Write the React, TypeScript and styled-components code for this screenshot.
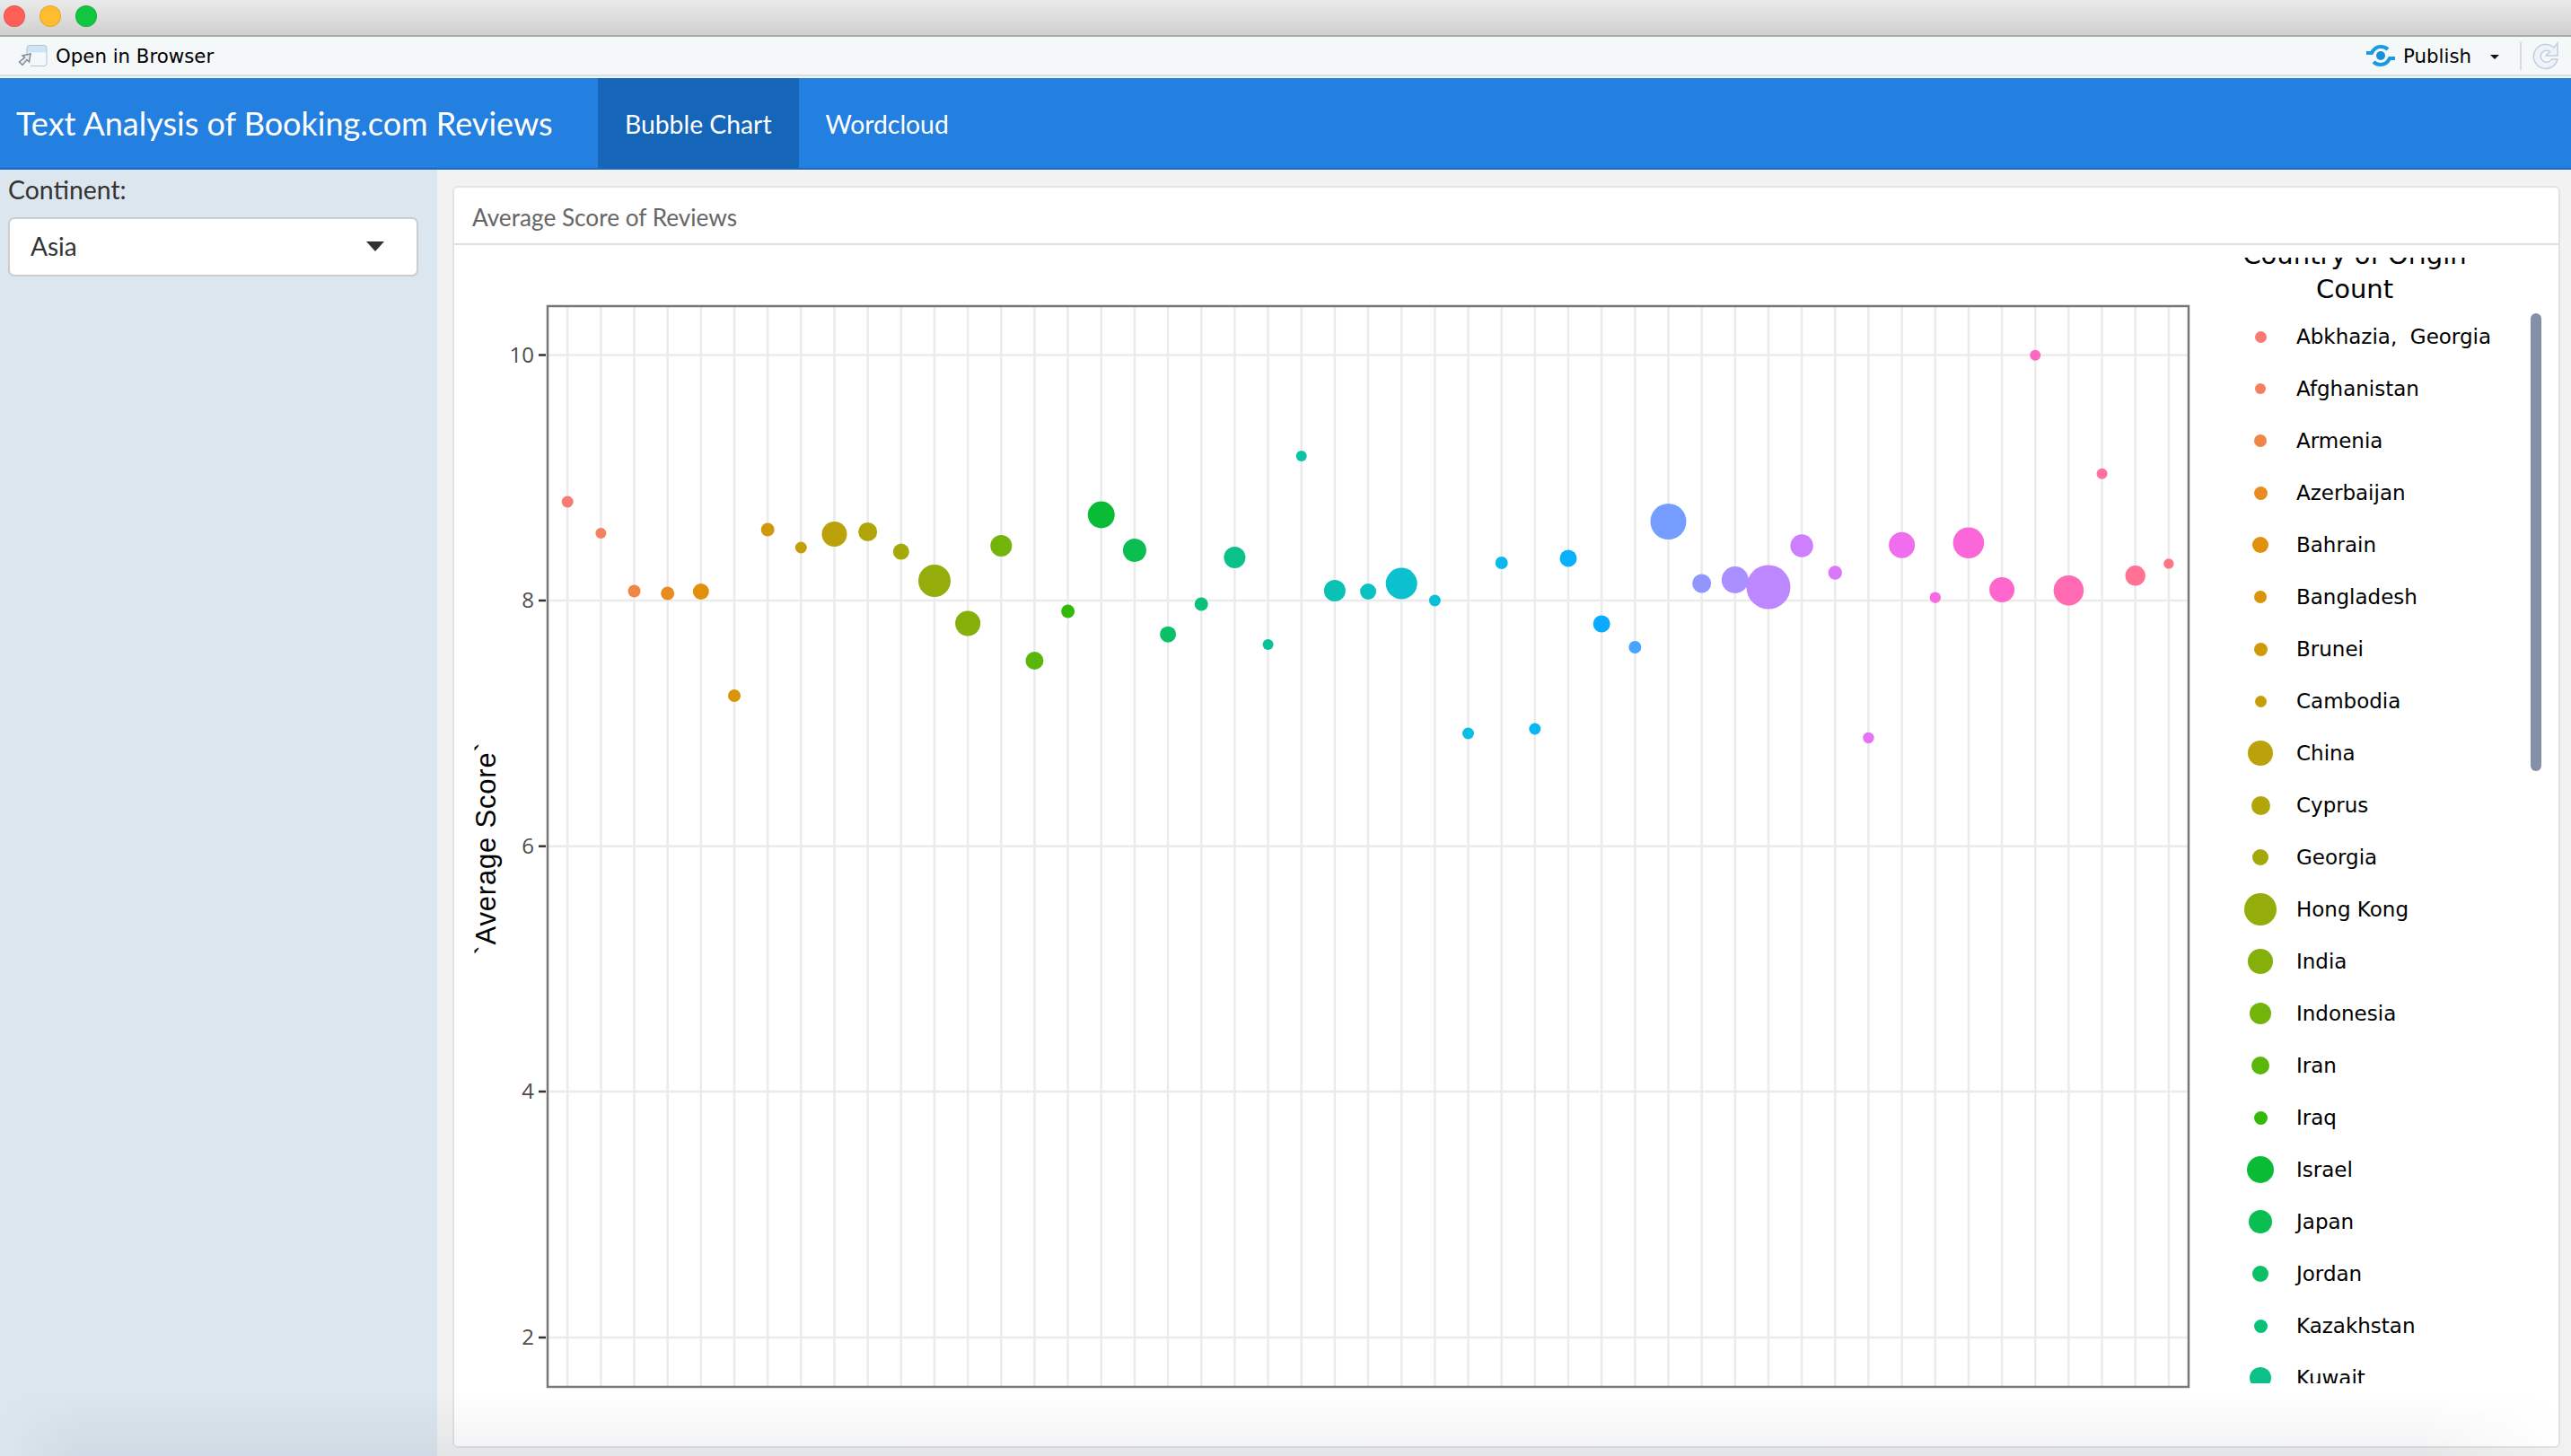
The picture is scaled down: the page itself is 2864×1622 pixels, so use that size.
import styled, { createGlobalStyle } from "styled-components";

const GlobalStyle = createGlobalStyle`
  html, body {
    margin: 0;
    padding: 0;
    background: #f2f2f2;
  }
  * {
    box-sizing: border-box;
  }
`;

const uiFont = `"Lato", "Open Sans", sans-serif`;
const chromeFont = `"DejaVu Sans", sans-serif`;

// ggplot's default hue palette, so the 49 countries get the same colours
const hueColor = (i: number, total: number) => {
  const h = ((15 + (360 * i) / total) * Math.PI) / 180;
  const l = 65;
  const c = 100;
  const u = Math.cos(h) * c;
  const v = Math.sin(h) * c;
  const Y = Math.pow((l + 16) / 116, 3);
  const un = 0.19793943;
  const vn = 0.46831096;
  const up = u / (13 * l) + un;
  const vp = v / (13 * l) + vn;
  const X = (Y * 9 * up) / (4 * vp);
  const Z = (Y * (12 - 3 * up - 20 * vp)) / (4 * vp);
  const gamma = (x: number) => {
    const clipped = Math.min(1, Math.max(0, x));
    const out =
      clipped <= 0.0031308
        ? 12.92 * clipped
        : 1.055 * Math.pow(clipped, 1 / 2.4) - 0.055;
    return Math.round(out * 255);
  };
  const r = gamma(3.2406 * X - 1.5372 * Y - 0.4986 * Z);
  const g = gamma(-0.9689 * X + 1.8758 * Y + 0.0415 * Z);
  const bl = gamma(0.0557 * X - 0.204 * Y + 1.057 * Z);
  return `rgba(${r},${g},${bl},0.96)`;
};

// y and radius are in page pixels, read off the screenshot
const bubbles: { y: number; r: number }[] = [
  { y: 559, r: 6.5 },
  { y: 594, r: 6 },
  { y: 658.5, r: 7 },
  { y: 661, r: 7.5 },
  { y: 659, r: 9 },
  { y: 775, r: 7 },
  { y: 590, r: 7.5 },
  { y: 610, r: 6.5 },
  { y: 595, r: 14 },
  { y: 592.5, r: 10.5 },
  { y: 614.6, r: 9 },
  { y: 647, r: 18 },
  { y: 694.5, r: 14 },
  { y: 608, r: 12 },
  { y: 736, r: 10 },
  { y: 681, r: 7.5 },
  { y: 573.5, r: 15 },
  { y: 613, r: 13 },
  { y: 706.7, r: 9 },
  { y: 673, r: 7.5 },
  { y: 621, r: 12 },
  { y: 718, r: 6 },
  { y: 508, r: 6 },
  { y: 658, r: 12 },
  { y: 659, r: 9 },
  { y: 650, r: 17.5 },
  { y: 669, r: 6.5 },
  { y: 817, r: 6.5 },
  { y: 627, r: 7 },
  { y: 812, r: 6.5 },
  { y: 622, r: 9.5 },
  { y: 695, r: 9.5 },
  { y: 721, r: 7 },
  { y: 581, r: 20 },
  { y: 650, r: 10.5 },
  { y: 646, r: 15 },
  { y: 654, r: 24.5 },
  { y: 608, r: 12.7 },
  { y: 638, r: 7.7 },
  { y: 822, r: 6.2 },
  { y: 607.3, r: 14.5 },
  { y: 665.7, r: 6.2 },
  { y: 604.7, r: 17.3 },
  { y: 657, r: 14 },
  { y: 395.7, r: 6 },
  { y: 657.7, r: 16.8 },
  { y: 527.7, r: 6 },
  { y: 641.3, r: 11.2 },
  { y: 628, r: 5.7 },
];

const countries = [
  "Abkhazia,  Georgia",
  "Afghanistan",
  "Armenia",
  "Azerbaijan",
  "Bahrain",
  "Bangladesh",
  "Brunei",
  "Cambodia",
  "China",
  "Cyprus",
  "Georgia",
  "Hong Kong",
  "India",
  "Indonesia",
  "Iran",
  "Iraq",
  "Israel",
  "Japan",
  "Jordan",
  "Kazakhstan",
  "Kuwait",
];

const ticks = [
  { label: "10", y: 395.5 },
  { label: "8", y: 669 },
  { label: "6", y: 942.7 },
  { label: "4", y: 1216 },
  { label: "2", y: 1490 },
];

const xFor = (i: number) => 632.2 + i * 37.16;

const Page = styled.div`
  position: relative;
  display: flex;
  flex-direction: column;
  width: 2864px;
  height: 1622px;
  overflow: hidden;
`;

const TitleBar = styled.div`
  display: flex;
  align-items: center;
  gap: 16px;
  flex: none;
  height: 41px;
  padding: 0 0 3px 4px;
  background: linear-gradient(#eaeaea, #d0d0d0);
  border-bottom: 2px solid #a9a9a9;
`;

const Light = styled.span<{ $color: string }>`
  width: 24px;
  height: 24px;
  border-radius: 50%;
  background: ${({ $color }) => $color};
  box-shadow: inset 0 0 0 1px rgba(0, 0, 0, 0.1);
`;

const Toolbar = styled.div`
  display: flex;
  align-items: center;
  flex: none;
  height: 44px;
  padding: 0 13px 0 20px;
  background: #f4f8f9;
  border-bottom: 2px solid #d9dfe2;
  font: 21.3px ${chromeFont};
  color: #000;
`;

const ToolbarLabel = styled.span`
  margin-left: 6px;
`;

const PublishLabel = styled.span`
  margin-left: 8px;
`;

const Spacer = styled.div`
  flex: 1;
`;

const PublishCaret = styled.span`
  width: 0;
  height: 0;
  margin: 3px 23px 0 21px;
  border-left: 5px solid transparent;
  border-right: 5px solid transparent;
  border-top: 5px solid #111;
`;

const ToolbarDivider = styled.span`
  width: 2px;
  height: 31px;
  margin-right: 12px;
  background: #d8dcdc;
`;

const Navbar = styled.nav`
  display: flex;
  align-items: stretch;
  flex: none;
  height: 102px;
  margin-top: 2px;
  background: #237fe0;
  border-bottom: 2px solid #1a69bd;
  color: #fff;
  font-family: ${uiFont};
`;

const Brand = styled.div`
  display: flex;
  align-items: center;
  width: 666px;
  padding-left: 18px;
  font-size: 36px;
`;

const Tab = styled.div<{ $active?: boolean }>`
  display: flex;
  align-items: center;
  padding: 2px 30px 0;
  font-size: 28.3px;
  background: ${({ $active }) => ($active ? "#1565b8" : "transparent")};
`;

const Body = styled.div`
  display: flex;
  flex: 1;
  min-height: 0;
`;

const Sidebar = styled.aside`
  flex: none;
  width: 487px;
  padding: 4px 21px 0 9px;
  background: #dce6ef;
  font-family: ${uiFont};
  color: #333;
`;

const FieldLabel = styled.label`
  display: block;
  height: 49px;
  font-size: 28.4px;
  line-height: 36px;
`;

const SelectBox = styled.div`
  display: flex;
  align-items: center;
  justify-content: space-between;
  height: 66px;
  padding: 0 36px 2px 23px;
  background: #fff;
  border: 2px solid #ccc;
  border-radius: 7px;
  font-size: 28px;
`;

const SelectCaret = styled.span`
  width: 0;
  height: 0;
  border-left: 10px solid transparent;
  border-right: 10px solid transparent;
  border-top: 11px solid #333;
`;

const Content = styled.main`
  flex: 1;
  min-width: 0;
  padding: 18px 12px 9px 17px;
`;

const Card = styled.section`
  display: flex;
  flex-direction: column;
  height: 100%;
  background: #fff;
  border: 2px solid #e2e2e2;
  border-radius: 6px;
  overflow: hidden;
`;

const CardHeader = styled.header`
  display: flex;
  align-items: center;
  flex: none;
  height: 64px;
  padding: 3px 0 0 20px;
  border-bottom: 2px solid #e0e0e0;
  font: 26.2px ${uiFont};
  color: #666;
`;

const CardBody = styled.div`
  display: flex;
  flex: 1;
  min-height: 0;
`;

const Plot = styled.svg`
  display: block;
  flex: none;
  width: 1960px;
  height: 1339px;
`;

const TickLabel = styled.text`
  font: 24px "Open Sans", sans-serif;
  fill: #4d4d4d;
`;

const AxisTitle = styled.text`
  font: 31px "Liberation Sans", sans-serif;
  letter-spacing: 0.8px;
  fill: #000;
`;

const Legend = styled.div`
  position: relative;
  flex: 1;
  height: 1254px;
  margin-top: 14px;
  overflow: hidden;
  font-family: ${chromeFont};
  color: #000;
`;

const LegendTitle = styled.div`
  width: 314px;
  margin-top: -22px;
  font-size: 29px;
  line-height: 38px;
  text-align: center;
`;

const LegendList = styled.ul`
  margin: 5px 0 0;
  padding: 0;
  list-style: none;
`;

const LegendRow = styled.li`
  display: flex;
  align-items: center;
  height: 58px;
  font-size: 23px;
  white-space: pre;
`;

const DotCell = styled.span`
  display: flex;
  align-items: center;
  justify-content: center;
  flex: none;
  width: 40px;
  margin: 0 20px 0 32px;
`;

const Dot = styled.span<{ $size: number; $color: string }>`
  width: ${({ $size }) => $size}px;
  height: ${({ $size }) => $size}px;
  border-radius: 50%;
  background: ${({ $color }) => $color};
`;

const LegendScrollbar = styled.div`
  position: absolute;
  top: 62px;
  right: 19px;
  width: 12px;
  height: 510px;
  border-radius: 6px;
  background: #8490a8;
`;

const WindowShade = styled.div`
  position: absolute;
  left: 0;
  right: 0;
  bottom: 0;
  height: 70px;
  pointer-events: none;
  background: linear-gradient(rgba(60, 70, 90, 0), rgba(60, 70, 90, 0.07));
  mask-image: linear-gradient(90deg, transparent 0, #000 90px, #000 2700px, transparent 100%);
`;

const OpenIcon = () => (
  <svg width="36" height="24" viewBox="0 0 36 24">
    <path d="M10 3.5a3 3 0 0 1 3-3h16a3 3 0 0 1 3 3v5H10z" fill="#cfe4f7" />
    <path
      d="M10 16V3.5a3 3 0 0 1 3-3h16a3 3 0 0 1 3 3v17a3 3 0 0 1-3 3H14"
      fill="none"
      stroke="#b3c2d0"
    />
    <path
      d="M5 12l9-2-1.500 9-2.500-2.500-5 6-3.500-3.500 6-5z"
      fill="#e8eef3"
      stroke="#7e8c98"
      strokeWidth="1.500"
    />
  </svg>
);

const PublishIcon = () => (
  <svg width="34" height="26" viewBox="0 0 34 26">
    <g fill="none" stroke="#1a9ae0" strokeWidth="4">
      <path d="M1 10h6c2-4 5-7 10-7 3 0 6 1 8 3" />
      <path d="M33 16h-6c-2 4-5 7-10 7-3 0-6-1-8-3" />
    </g>
    <circle cx="17" cy="13" r="5" fill="#1a8fdc" />
  </svg>
);

const RefreshIcon = () => (
  <svg width="30" height="32" viewBox="0 0 30 32">
    <path
      d="M29 2v14H16l4.500-4.500a6.500 6.500 0 1 0 2 8.500h6.500a13.500 13.500 0 1 1-4-13z"
      transform="translate(-1 0)"
      fill="#eef3f9"
      stroke="#c2cedc"
      strokeWidth="1.500"
    />
  </svg>
);

const BubblePlot = () => (
  <Plot viewBox="506 273 1960 1339">
    {bubbles.map((_, i) => (
      <line
        key={i}
        x1={xFor(i)}
        x2={xFor(i)}
        y1={341}
        y2={1545}
        stroke="#ebebeb"
        strokeWidth="2.500"
      />
    ))}
    {ticks.map((t) => (
      <g key={t.label}>
        <line x1={610} x2={2438} y1={t.y} y2={t.y} stroke="#ebebeb" strokeWidth="2.500" />
        <line x1={600} x2={608} y1={t.y} y2={t.y} stroke="#333" strokeWidth="2.500" />
        <TickLabel x={595} y={t.y + 8} textAnchor="end">
          {t.label}
        </TickLabel>
      </g>
    ))}
    {bubbles.map((b, i) => (
      <circle key={i} cx={xFor(i)} cy={b.y} r={b.r} fill={hueColor(i, bubbles.length)} />
    ))}
    <rect x={610} y={341} width={1828} height={1204} fill="none" stroke="#777" strokeWidth="2.500" />
    <AxisTitle x={552} y={945} textAnchor="middle" transform="rotate(-90 552 945)">
      `Average Score`
    </AxisTitle>
  </Plot>
);

export default function App() {
  return (
    <>
      <GlobalStyle />
      <Page>
        <TitleBar>
          <Light $color="#ff5f57" />
          <Light $color="#febc2e" />
          <Light $color="#12c640" />
        </TitleBar>
        <Toolbar>
          <OpenIcon />
          <ToolbarLabel>Open in Browser</ToolbarLabel>
          <Spacer />
          <PublishIcon />
          <PublishLabel>Publish</PublishLabel>
          <PublishCaret />
          <ToolbarDivider />
          <RefreshIcon />
        </Toolbar>
        <Navbar>
          <Brand>Text Analysis of Booking.com Reviews</Brand>
          <Tab $active>Bubble Chart</Tab>
          <Tab>Wordcloud</Tab>
        </Navbar>
        <Body>
          <Sidebar>
            <FieldLabel>Continent:</FieldLabel>
            <SelectBox>
              Asia
              <SelectCaret />
            </SelectBox>
          </Sidebar>
          <Content>
            <Card>
              <CardHeader>Average Score of Reviews</CardHeader>
              <CardBody>
                <BubblePlot />
                <Legend>
                  <LegendTitle>
                    Country of Origin
                    <br />
                    Count
                  </LegendTitle>
                  <LegendList>
                    {countries.map((name, i) => (
                      <LegendRow key={name}>
                        <DotCell>
                          <Dot $size={bubbles[i].r * 2} $color={hueColor(i, bubbles.length)} />
                        </DotCell>
                        {name}
                      </LegendRow>
                    ))}
                  </LegendList>
                  <LegendScrollbar />
                </Legend>
              </CardBody>
            </Card>
          </Content>
        </Body>
        <WindowShade />
      </Page>
    </>
  );
}
